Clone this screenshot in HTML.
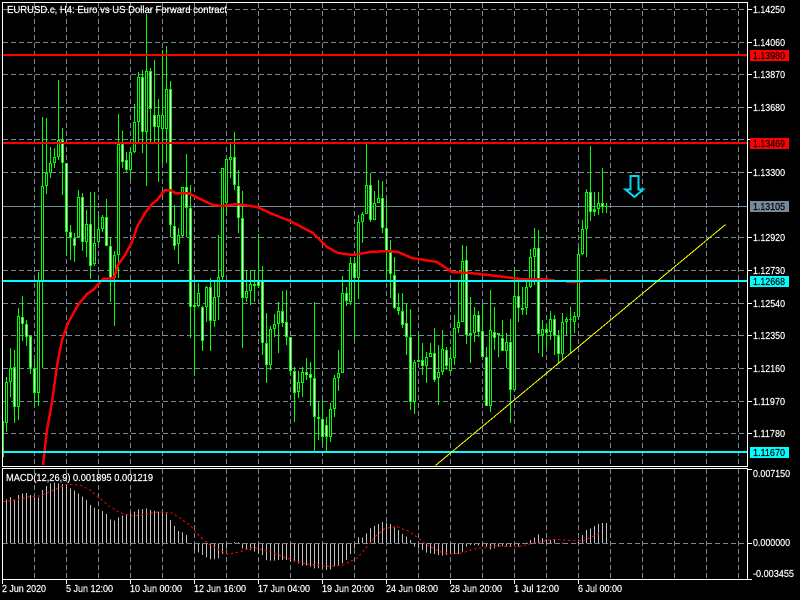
<!DOCTYPE html>
<html><head><meta charset="utf-8"><title>EURUSD.c, H4</title>
<style>
html,body{margin:0;padding:0;background:#000;width:800px;height:600px;overflow:hidden}
svg{display:block}
text{font-family:"Liberation Sans",sans-serif;font-size:10.5px;fill:#fff;stroke:#fff;stroke-width:.2}
</style></head><body>
<svg width="800" height="600" viewBox="0 0 800 600" xmlns="http://www.w3.org/2000/svg">
<rect width="800" height="600" fill="#000"/>
<g shape-rendering="crispEdges">
<!-- grid -->
<path fill="none" stroke="#778899" stroke-dasharray="5 3" d="M34.5 3V466M66.5 3V466M98.5 3V466M130.5 3V466M162.5 3V466M194.5 3V466M226.5 3V466M258.5 3V466M290.5 3V466M322.5 3V466M354.5 3V466M386.5 3V466M418.5 3V466M450.5 3V466M482.5 3V466M514.5 3V466M546.5 3V466M578.5 3V466M610.5 3V466M642.5 3V466M674.5 3V466M706.5 3V466M738.5 3V466
M34.5 469V579M66.5 469V579M98.5 469V579M130.5 469V579M162.5 469V579M194.5 469V579M226.5 469V579M258.5 469V579M290.5 469V579M322.5 469V579M354.5 469V579M386.5 469V579M418.5 469V579M450.5 469V579M482.5 469V579M514.5 469V579M546.5 469V579M578.5 469V579M610.5 469V579M642.5 469V579M674.5 469V579M706.5 469V579M738.5 469V579
M3 9.5H747M3 42.5H747M3 74.5H747M3 107.5H747M3 139.5H747M3 172.5H747M3 237.5H747M3 270.5H747M3 303.5H747M3 335.5H747M3 368.5H747M3 401.5H747M3 433.5H747"/>
<path fill="none" stroke="#778899" d="M3 206.5H747"/>
<!-- wicks -->
<path fill="none" stroke="#00ff00" d="M3.5 421V457M6.5 377V432M10.5 348V397M14.5 350V423M18.5 308V420M22.5 296V341M26.5 320V346M30.5 335V374M34.5 359V406M38.5 272V406M42.5 117V368M46.5 118V194M50.5 147V178M54.5 148V168M58.5 80V160M62.5 128V195M66.5 163V256M70.5 225V260M74.5 233V262M78.5 190V237M82.5 193V251M86.5 210V257M90.5 192V279M94.5 192V266M98.5 215V243M102.5 215V232M106.5 199V246M110.5 237V302M114.5 251V326M118.5 114V278M122.5 131V168M126.5 152V172M130.5 147V180M134.5 104V153M138.5 72V143M142.5 70V153M146.5 14V186M150.5 68V143M154.5 60V143M158.5 99V182M162.5 50V163M166.5 46V163M170.5 81V237M174.5 205V250M178.5 228V264M182.5 187V237M186.5 154V237M190.5 185V338M194.5 281V376M198.5 283V307M202.5 306V351M206.5 286V322M210.5 278V351M214.5 280V327M218.5 235V320M222.5 168V280M226.5 159V215M230.5 142V178M234.5 132V190M238.5 170V233M242.5 191V348M246.5 270V302M250.5 270V305M254.5 270V302M258.5 234V288M262.5 266V355M266.5 313V383M270.5 326V370M274.5 314V337M278.5 302V353M282.5 291V327M286.5 290V345M290.5 337V375M294.5 367V422M298.5 371V398M302.5 367V397M306.5 358V380M310.5 362V406M314.5 302V451M318.5 402V440M322.5 400V445M326.5 417V451M330.5 403V442M334.5 375V417M338.5 350V391M342.5 276V373M346.5 287V306M350.5 257V305M354.5 257V341M358.5 215V299M362.5 212V243M366.5 142V214M370.5 173V222M374.5 191V220M378.5 180V203M382.5 181V233M386.5 200V280M390.5 240V298M394.5 257V309M398.5 293V315M402.5 293V328M406.5 303V355M410.5 309V410M414.5 360V414M418.5 333V362M422.5 343V375M426.5 352V383M430.5 343V357M434.5 328V382M438.5 345V405M442.5 330V375M446.5 347V370M450.5 347V373M454.5 315V365M458.5 282V333M462.5 245V322M466.5 246V344M470.5 297V363M474.5 307V342M478.5 311V337M482.5 304V357M486.5 347V406M490.5 290V412M494.5 307V350M498.5 333V357M502.5 320V351M506.5 333V368M510.5 319V423M514.5 267V390M518.5 282V322M522.5 287V315M526.5 282V315M530.5 249V288M534.5 228V285M538.5 230V353M542.5 320V357M546.5 324V348M550.5 311V340M554.5 315V355M558.5 330V363M562.5 313V360M566.5 317V335M570.5 307V353M574.5 312V333M578.5 248V317M582.5 220V255M586.5 189V257M590.5 146V221M594.5 192V216M598.5 192V215M602.5 168V213M606.5 203V213"/>
<!-- bodies -->
<path fill="none" stroke="#00ff00" stroke-width="3" d="M6.5 382V423M10.5 368V382M14.5 367V407M18.5 316V407M22.5 317V324M26.5 324V337M30.5 336V368M34.5 368V393M38.5 281V393M42.5 186V281M46.5 173V186M50.5 163V173M54.5 157V163M58.5 140V157M62.5 140V163M66.5 163V232M70.5 232V238M74.5 238V246M78.5 197V237M82.5 197V242M86.5 224V242M90.5 224V266M94.5 243V264M98.5 229V242M102.5 217V229M106.5 217V246M110.5 246V278M114.5 255V278M118.5 144V255M122.5 144V162M126.5 160V170M130.5 152V170M134.5 122V152M138.5 77V122M142.5 77V132M146.5 71V132M150.5 71V109M154.5 115V127M158.5 115V127M162.5 115V129M166.5 89V129M170.5 89V225M174.5 226V246M178.5 235V244M182.5 187V236M186.5 187V208M190.5 208V307M194.5 305V307M198.5 293V306M202.5 307V341M206.5 287V307M210.5 287V321M214.5 297V321M218.5 277V297M222.5 168V277M226.5 159V203M230.5 157V160M234.5 157V185M238.5 186V218M242.5 218V298M246.5 291V298M250.5 284V291M254.5 284V286M258.5 281V286M262.5 281V343M266.5 343V365M270.5 329V365M274.5 324V329M278.5 311V324M282.5 311V323M286.5 322V337M290.5 337V371M294.5 371V393M298.5 382V392M302.5 372V383M306.5 372V375M310.5 374V378M314.5 378V417M318.5 417V419M322.5 419V437M326.5 425V437M330.5 409V437M334.5 378V409M338.5 373V378M342.5 293V373M346.5 293V301M350.5 263V302M354.5 263V278M358.5 222V278M362.5 214V222M366.5 185V214M370.5 185V220M374.5 203V220M378.5 198V203M382.5 198V228M386.5 228V252M390.5 252V274M394.5 275V308M398.5 307V311M402.5 311V325M406.5 323V337M410.5 337V402M414.5 362V402M418.5 360V362M422.5 360V366M426.5 357V366M430.5 353V357M434.5 353V380M438.5 372V378M442.5 349V372M446.5 350V366M450.5 358V371M454.5 328V358M458.5 322V328M462.5 261V322M466.5 260V335M470.5 333V335M474.5 315V333M478.5 315V332M482.5 331V357M486.5 357V406M490.5 330V406M494.5 332V338M498.5 333V335M502.5 338V351M506.5 342V351M510.5 342V390M514.5 296V390M518.5 296V308M522.5 308V310M526.5 287V308M530.5 257V287M534.5 248V257M538.5 248V334M542.5 329V335M546.5 329V333M550.5 319V332M554.5 319V336M558.5 336V354M562.5 322V354M566.5 319V322M570.5 319V320M574.5 316V322M578.5 254V317M582.5 229V254M586.5 192V229M590.5 192V212M594.5 209V212M598.5 203V209M602.5 203V207M606.5 206V207"/>
<!-- hollow centres -->
<path fill="none" stroke="#000" d="M6.5 383V422M10.5 369V381M18.5 317V406M38.5 282V392M42.5 187V280M46.5 174V185M50.5 164V172M54.5 158V162M58.5 141V156M78.5 198V236M86.5 225V241M94.5 244V263M98.5 230V241M102.5 218V228M114.5 256V277M118.5 145V254M130.5 153V169M134.5 123V151M138.5 78V121M146.5 72V131M158.5 116V126M162.5 116V128M166.5 90V128M178.5 236V243M182.5 188V235M198.5 294V305M206.5 288V306M214.5 298V320M218.5 278V296M222.5 169V276M226.5 160V202M230.5 158V159M246.5 292V297M250.5 285V290M270.5 330V364M274.5 325V328M278.5 312V323M298.5 383V391M302.5 373V382M330.5 410V436M334.5 379V408M338.5 374V377M342.5 294V372M350.5 264V301M358.5 223V277M362.5 215V221M366.5 186V213M374.5 204V219M378.5 199V202M414.5 363V401M426.5 358V365M430.5 354V356M438.5 373V377M442.5 350V371M450.5 359V370M454.5 329V357M458.5 323V327M462.5 262V321M474.5 316V332M490.5 331V405M506.5 343V350M514.5 297V389M526.5 288V307M530.5 258V286M534.5 249V256M542.5 330V334M550.5 320V331M562.5 323V353M566.5 320V321M574.5 317V321M578.5 255V316M582.5 230V253M586.5 193V228M598.5 204V208"/>
<!-- bear centres -->
<path fill="none" stroke="#fff" d="M14.5 368V406M22.5 318V323M26.5 325V336M30.5 337V367M34.5 369V392M62.5 141V162M66.5 164V231M70.5 233V237M74.5 239V245M82.5 198V241M90.5 225V265M106.5 218V245M110.5 247V277M122.5 145V161M126.5 161V169M142.5 78V131M150.5 72V108M154.5 116V126M170.5 90V224M174.5 227V245M186.5 188V207M190.5 209V306M202.5 308V340M210.5 288V320M234.5 158V184M238.5 187V217M242.5 219V297M258.5 282V285M262.5 282V342M266.5 344V364M282.5 312V322M286.5 323V336M290.5 338V370M294.5 372V392M306.5 373V374M310.5 375V377M314.5 379V416M322.5 420V436M326.5 426V436M346.5 294V300M354.5 264V277M370.5 186V219M382.5 199V227M386.5 229V251M390.5 253V273M394.5 276V307M402.5 312V324M406.5 324V336M410.5 338V401M422.5 361V365M434.5 354V379M446.5 351V365M466.5 261V334M478.5 316V331M482.5 332V356M486.5 358V405M494.5 333V337M502.5 339V350M510.5 343V389M518.5 297V307M538.5 249V333M546.5 330V332M554.5 320V335M558.5 337V353M590.5 193V211M602.5 204V206"/>
<!-- MA -->
<path fill="none" stroke="#ff0000" stroke-width="2.5" d="M43 465L47 430L52 402L56 373L58 360L62 340L68 323L78 305L87 294L93 290L103 279L114 278L118 265L125 255L132 242L137 227L145 213L152 204L157 200L165 190L170 190L175 193L188 193L200 199L213 205L223 206L237 204L257 207L270 213L290 221L313 233L327 247L338 253L353 255L370 252L387 251L398 252L412 258L437 262L452 272L470 273L497 276L520 279L540 279L548 279"/>
<path fill="none" stroke="#ff0000" d="M548 279.5H555M566 282.5H583M595 279.5H607"/>
<!-- hlines -->
<path fill="none" stroke="#ff0000" stroke-width="2" d="M3 55H747M3 143H747"/>
<path fill="none" stroke="#00ffff" stroke-width="2" d="M3 281H747M3 452H747"/>
<!-- trend -->
<path fill="none" stroke="#ffff00" d="M435.5 465.5L725.5 224.5"/>
<!-- arrow -->
<path fill="none" stroke="#00d8f0" stroke-width="2" d="M630.5 176H638.5V189.5H643L634.5 197L625.5 189.5H630.5Z"/>
<!-- MACD histogram -->
<path fill="none" stroke="#c0c0c0" transform="translate(0,400) scale(1,.33333)" d="M6.5 430V298M10.5 430V291M14.5 430V298M18.5 430V285M22.5 430V280M26.5 430V279M30.5 430V285M34.5 430V291M38.5 430V293M42.5 430V270M46.5 430V258M50.5 430V250M54.5 430V248M58.5 430V250M62.5 430V252M66.5 430V253M70.5 430V265M74.5 430V272M78.5 430V280M82.5 430V290M86.5 430V300M90.5 430V315M94.5 430V323M98.5 430V328M102.5 430V333M106.5 430V342M110.5 430V358M114.5 430V362M118.5 430V352M122.5 430V347M126.5 430V345M130.5 430V340M134.5 430V335M138.5 430V328M142.5 430V327M146.5 430V325M150.5 430V330M154.5 430V333M158.5 430V335M162.5 430V335M166.5 430V340M170.5 430V360M174.5 430V378M178.5 430V393M182.5 430V397M186.5 430V405M194.5 430V452M198.5 430V457M202.5 430V465M206.5 430V472M210.5 430V478M214.5 430V478M218.5 430V475M222.5 430V462M226.5 430V445M234.5 430V426M238.5 430V427M242.5 430V445M246.5 430V450M250.5 430V450M254.5 430V455M258.5 430V460M262.5 430V465M266.5 430V480M270.5 430V482M274.5 430V482M278.5 430V480M282.5 430V480M286.5 430V480M290.5 430V485M294.5 430V485M298.5 430V490M302.5 430V497M306.5 430V497M310.5 430V500M314.5 430V505M318.5 430V505M322.5 430V505M326.5 430V510M330.5 430V508M334.5 430V500M338.5 430V495M342.5 430V490M346.5 430V480M350.5 430V462M354.5 430V445M358.5 430V412M362.5 430V412M366.5 430V400M370.5 430V385M374.5 430V378M378.5 430V372M382.5 430V366M386.5 430V368M390.5 430V372M394.5 430V380M398.5 430V390M402.5 430V402M406.5 430V410M410.5 430V420M414.5 430V440M418.5 430V445M422.5 430V450M426.5 430V458M430.5 430V460M434.5 430V462M438.5 430V465M442.5 430V467M446.5 430V465M450.5 430V463M454.5 430V462M458.5 430V462M462.5 430V455M466.5 430V440M470.5 430V435M474.5 430V435M478.5 430V437M482.5 430V440M486.5 430V440M490.5 430V448M494.5 430V445M498.5 430V440M502.5 430V438M506.5 430V440M510.5 430V438M514.5 430V435M518.5 430V440M522.5 430V432M526.5 430V428M530.5 430V420M534.5 430V413M538.5 430V403M542.5 430V415M546.5 430V418M550.5 430V420M554.5 430V420M558.5 430V432M562.5 430V428M578.5 430V418M582.5 430V405M586.5 430V390M590.5 430V385M594.5 430V378M598.5 430V372M602.5 430V369M606.5 430V369"/>
<path fill="none" stroke="#778899" stroke-dasharray="5 3" d="M3 543.5H747"/>
<path fill="none" stroke="#ff0000" stroke-dasharray="2.5 2.5" d="M3 501.7L10 501L20 499L30 496.7L40 496L50 491.7L60 487.3L67 484.3L80 485L90 490L100 498.3L110 506.7L120 512.7L133 516L147 514L160 511.7L173 513.3L190 525L200 536.7L210 545L227 554.3L240 551.7L253 547.3L270 551.7L283 556.7L303 563.3L327 566.7L343 565L357 558.3L367 546.7L377 535L385 528.3L397 526.7L410 531.7L427 545L440 551.7L450 554L463 552.7L477 548.3L497 546L517 547L533 543.3L540 541.7L553 539.3L573 540.7L583 541L590 537.7L602 532.3"/>
</g>
<!-- frame -->
<g shape-rendering="crispEdges" fill="none" stroke="#fff">
<path d="M2.5 2.5H747.5V466.5H2.5ZM2.5 468.5H747.5V579.5H2.5Z"/>
<path d="M748 9.5H752M748 42.5H752M748 74.5H752M748 107.5H752M748 139.5H752M748 172.5H752M748 237.5H752M748 270.5H752M748 303.5H752M748 335.5H752M748 368.5H752M748 401.5H752M748 433.5H752M748 469.5H752M748 543.5H752M748 579.5H752"/>
<path d="M2.5 580V584M66.5 580V584M130.5 580V584M194.5 580V584M258.5 580V584M322.5 580V584M386.5 580V584M450.5 580V584M514.5 580V584M578.5 580V584"/>
</g>
<g shape-rendering="crispEdges">
<rect x="750" y="50" width="39" height="11" fill="#ff0000"/>
<rect x="750" y="138" width="39" height="11" fill="#ff0000"/>
<rect x="750" y="201" width="39" height="11" fill="#778899"/>
<rect x="750" y="276" width="39" height="11" fill="#00ffff"/>
<rect x="750" y="447" width="39" height="11" fill="#00ffff"/>
</g>
<!-- labels -->
<text x="7" y="13" textLength="220" lengthAdjust="spacingAndGlyphs">EURUSD.c, H4:  Euro vs US Dollar Forward contract</text>
<text x="6" y="481" textLength="147" lengthAdjust="spacingAndGlyphs">MACD(12,26,9) 0.001895 0.001219</text>
<g>
<text x="753" y="13" textLength="32" lengthAdjust="spacingAndGlyphs">1.14250</text>
<text x="753" y="46" textLength="32" lengthAdjust="spacingAndGlyphs">1.14060</text>
<text x="753" y="78" textLength="32" lengthAdjust="spacingAndGlyphs">1.13870</text>
<text x="753" y="111" textLength="32" lengthAdjust="spacingAndGlyphs">1.13680</text>
<text x="753" y="176" textLength="32" lengthAdjust="spacingAndGlyphs">1.13300</text>
<text x="753" y="241" textLength="32" lengthAdjust="spacingAndGlyphs">1.12920</text>
<text x="753" y="274" textLength="32" lengthAdjust="spacingAndGlyphs">1.12730</text>
<text x="753" y="307" textLength="32" lengthAdjust="spacingAndGlyphs">1.12540</text>
<text x="753" y="339" textLength="32" lengthAdjust="spacingAndGlyphs">1.12350</text>
<text x="753" y="372" textLength="32" lengthAdjust="spacingAndGlyphs">1.12160</text>
<text x="753" y="405" textLength="32" lengthAdjust="spacingAndGlyphs">1.11970</text>
<text x="753" y="437" textLength="32" lengthAdjust="spacingAndGlyphs">1.11780</text>
<text x="753" y="59" textLength="32" lengthAdjust="spacingAndGlyphs" style="fill:#000;stroke:#000">1.13980</text>
<text x="753" y="147" textLength="32" lengthAdjust="spacingAndGlyphs" style="fill:#000;stroke:#000">1.13469</text>
<text x="753" y="210" textLength="32" lengthAdjust="spacingAndGlyphs" style="fill:#000;stroke:#000">1.13105</text>
<text x="753" y="285" textLength="32" lengthAdjust="spacingAndGlyphs" style="fill:#000;stroke:#000">1.12668</text>
<text x="753" y="456" textLength="32" lengthAdjust="spacingAndGlyphs" style="fill:#000;stroke:#000">1.11670</text>
<text x="753" y="477" textLength="37" lengthAdjust="spacingAndGlyphs">0.007150</text>
<text x="753" y="546" textLength="37" lengthAdjust="spacingAndGlyphs">0.000000</text>
<text x="753" y="577" textLength="41" lengthAdjust="spacingAndGlyphs">-0.003455</text>
<text x="2" y="592" textLength="44" lengthAdjust="spacingAndGlyphs">2 Jun 2020</text>
<text x="66" y="592" textLength="47" lengthAdjust="spacingAndGlyphs">5 Jun 12:00</text>
<text x="130" y="592" textLength="52" lengthAdjust="spacingAndGlyphs">10 Jun 00:00</text>
<text x="194" y="592" textLength="52" lengthAdjust="spacingAndGlyphs">12 Jun 16:00</text>
<text x="258" y="592" textLength="52" lengthAdjust="spacingAndGlyphs">17 Jun 04:00</text>
<text x="322" y="592" textLength="52" lengthAdjust="spacingAndGlyphs">19 Jun 20:00</text>
<text x="386" y="592" textLength="52" lengthAdjust="spacingAndGlyphs">24 Jun 08:00</text>
<text x="450" y="592" textLength="52" lengthAdjust="spacingAndGlyphs">28 Jun 20:00</text>
<text x="514" y="592" textLength="45" lengthAdjust="spacingAndGlyphs">1 Jul 12:00</text>
<text x="578" y="592" textLength="44" lengthAdjust="spacingAndGlyphs">6 Jul 00:00</text>
</g>
</svg>
</body></html>
